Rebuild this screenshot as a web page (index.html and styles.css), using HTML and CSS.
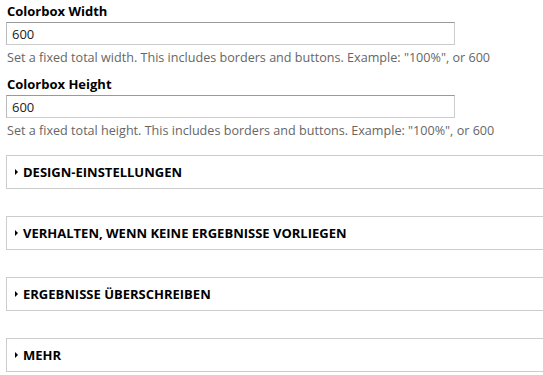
FILE: index.html
```html
<!DOCTYPE html>
<html lang="de">
<head>
    <meta charset="UTF-8">
    <title>Colorbox</title>
    <link rel="stylesheet" href="styles.css">
</head>
<body>
    <div class="form_item">
        <label for="cbWidth">Colorbox Width</label>
        <input type="text" id="cbWidth" value="600"/>
        <div class="description">Set a fixed total width. This includes borders and buttons. Example: "100%", or 600</div>
    </div>
    <div class="form_item">
        <label for="cbHeight">Colorbox Height</label>
        <input type="text" id="cbHeight" value="600"/>
        <div class="description">Set a fixed total height. This includes borders and buttons. Example: "100%", or 600</div>
    </div>

    <div class="fieldset"><span class="arrow"></span>DESIGN-EINSTELLUNGEN</div>
    <div class="fieldset"><span class="arrow"></span>VERHALTEN, WENN KEINE ERGEBNISSE VORLIEGEN</div>
    <div class="fieldset"><span class="arrow"></span>ERGEBNISSE ÜBERSCHREIBEN</div>
    <div class="fieldset"><span class="arrow"></span>MEHR</div>
</body>
</html>
```

FILE: styles.css
```css
* {
    font-family: "Open Sans", sans-serif;
    box-sizing: border-box;
}
body {
    margin: 0;
    padding: 3px 0 0 6px;
    background-color: #fff;
    color: #000;
    overflow: hidden;
}
.form_item {
    margin-bottom: 10px;
}
label {
    display: block;
    font-size: 13px;
    font-weight: bold;
    line-height: 16px;
    padding-left: 1px;
    margin-bottom: 3px;
}
input {
    display: block;
    width: 449px;
    height: 23px;
    margin: 0;
    border: 1px solid #ccc;
    border-top-color: #999;
    border-left-color: #bbb;
    padding: 0 5px;
    font-size: 13px;
    color: #222;
}
.description {
    font-size: 12.6px;
    color: #666;
    line-height: 16px;
    margin-top: 5px;
    padding-left: 1px;
}
.fieldset {
    width: 560px;
    height: 34px;
    border: 1px solid #ccc;
    margin-top: 27px;
    display: flex;
    align-items: center;
    padding-left: 8px;
    font-size: 13px;
    font-weight: bold;
}
.form_item + .fieldset {
    margin-top: 16px;
}
.arrow {
    width: 0;
    height: 0;
    border-top: 3px solid transparent;
    border-bottom: 3px solid transparent;
    border-left: 3px solid #000;
    margin-right: 5px;
}
```
